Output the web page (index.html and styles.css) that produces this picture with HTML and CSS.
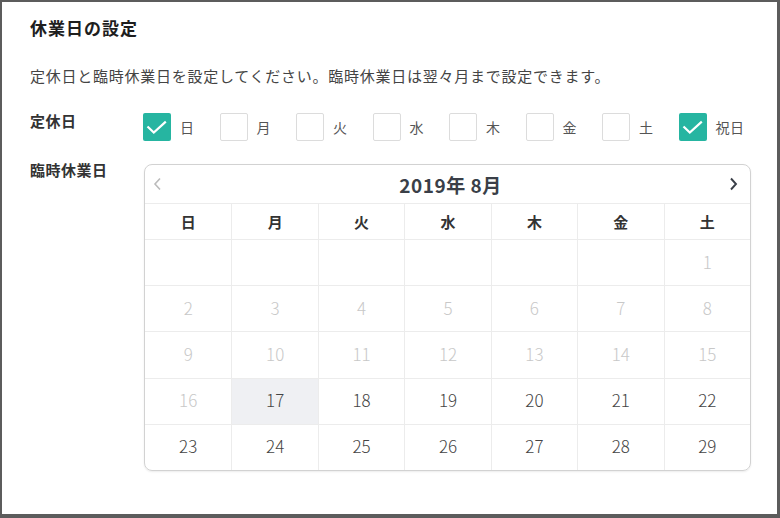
FILE: index.html
```html
<!DOCTYPE html>
<html lang="ja">

<head>
  <meta charset="UTF-8">
  <meta name="viewport" content="width=device-width, initial-scale=1.0">
  <title>休業日の設定</title>
  <link rel="stylesheet" href="styles.css">
</head>

<body>
  <div class="panel">
    <h1>休業日の設定</h1>

    <p class="desc">定休日と臨時休業日を設定してください。臨時休業日は翌々月まで設定できます。</p>

    <div class="form-row">
      <div class="label">定休日</div>
      <div class="checks">
        <label class="check checked"><span class="box"><svg width="28" height="28" viewBox="0 0 28 28"><path d="M4.5 13.5 10.8 19.6 22.8 8.6" fill="none" stroke="#fff" stroke-width="2.2"/></svg></span>日</label>
        <label class="check"><span class="box"></span>月</label>
        <label class="check"><span class="box"></span>火</label>
        <label class="check"><span class="box"></span>水</label>
        <label class="check"><span class="box"></span>木</label>
        <label class="check"><span class="box"></span>金</label>
        <label class="check"><span class="box"></span>土</label>
        <label class="check checked"><span class="box"><svg width="28" height="28" viewBox="0 0 28 28"><path d="M4.5 13.5 10.8 19.6 22.8 8.6" fill="none" stroke="#fff" stroke-width="2.2"/></svg></span>祝日</label>
      </div>
    </div>

    <div class="form-row">
      <div class="label">臨時休業日</div>
      <div class="calendar">
        <div class="cal-head">
          <span class="nav prev">
            <svg width="9" height="14" viewBox="0 0 9 14"><path d="M7 1.5 2 7l5 5.5" fill="none" stroke="currentColor" stroke-width="1.6"/></svg>
          </span>
          <span class="month">2019年 8月</span>
          <span class="nav next">
            <svg width="9" height="14" viewBox="0 0 9 14"><path d="M2 1.5 7 7l-5 5.5" fill="none" stroke="currentColor" stroke-width="1.9"/></svg>
          </span>
        </div>
        <div class="cal-grid">
          <div class="wd">日</div>
          <div class="wd">月</div>
          <div class="wd">火</div>
          <div class="wd">水</div>
          <div class="wd">木</div>
          <div class="wd">金</div>
          <div class="wd">土</div>

          <div class="day"></div>
          <div class="day"></div>
          <div class="day"></div>
          <div class="day"></div>
          <div class="day"></div>
          <div class="day"></div>
          <div class="day off">1</div>

          <div class="day off">2</div>
          <div class="day off">3</div>
          <div class="day off">4</div>
          <div class="day off">5</div>
          <div class="day off">6</div>
          <div class="day off">7</div>
          <div class="day off">8</div>

          <div class="day off">9</div>
          <div class="day off">10</div>
          <div class="day off">11</div>
          <div class="day off">12</div>
          <div class="day off">13</div>
          <div class="day off">14</div>
          <div class="day off">15</div>

          <div class="day off">16</div>
          <div class="day today">17</div>
          <div class="day">18</div>
          <div class="day">19</div>
          <div class="day">20</div>
          <div class="day">21</div>
          <div class="day">22</div>

          <div class="day">23</div>
          <div class="day">24</div>
          <div class="day">25</div>
          <div class="day">26</div>
          <div class="day">27</div>
          <div class="day">28</div>
          <div class="day">29</div>
        </div>
      </div>
    </div>
  </div>
</body>

</html>
```

FILE: styles.css
```css
* {
  box-sizing: border-box;
  margin: 0;
  padding: 0;
}

body {
  font-family: "Noto Sans CJK JP", "Noto Sans", sans-serif;
  background-color: #fff;
  color: #333;
}

.panel {
  width: 780px;
  height: 518px;
  border: 2px solid #5c5c5c;
  border-right-width: 3px;
  border-bottom-width: 4px;
  padding: 14px 10px 0 28px;
  background-color: #fff;
}

h1 {
  font-size: 17px;
  font-weight: bold;
  letter-spacing: 1px;
  color: #1e1e1e;
  line-height: 24px;
  margin-bottom: 26px;
}

.desc {
  font-size: 15px;
  letter-spacing: 0.75px;
  color: #444;
  line-height: 20px;
  margin-bottom: 27px;
}

.form-row {
  display: flex;
  margin-bottom: 21px;
}

.label {
  width: 114px;
  flex-shrink: 0;
  font-size: 15px;
  font-weight: bold;
  letter-spacing: 0.5px;
  color: #333;
  line-height: 16px;
}

.checks {
  display: flex;
  margin-left: -1px;
}

.check {
  display: flex;
  align-items: center;
  width: 76.5px;
  font-size: 14px;
  letter-spacing: 0.5px;
  color: #555;
  line-height: 28px;
}

.check:last-child {
  width: auto;
}

.box {
  display: flex;
  width: 28px;
  height: 28px;
  border: 1px solid #dcdcdc;
  border-radius: 2px;
  margin-right: 9px;
}

.check.checked .box {
  background-color: #26b5a1;
  border: none;
}

.calendar {
  width: 607px;
  flex-shrink: 0;
  border: 1px solid #d2d2d2;
  border-radius: 8px;
  overflow: hidden;
  margin-top: 2px;
  box-shadow: 0 1px 2px rgba(0, 0, 0, 0.08);
}

.cal-head {
  height: 38px;
  display: flex;
  align-items: center;
  justify-content: space-between;
  padding: 0 12px 0 8px;
}

.month {
  font-size: 19px;
  font-weight: bold;
  letter-spacing: 0.5px;
  color: #3a3f48;
  margin-left: 10px;
}

.nav {
  display: flex;
  color: #3a3f48;
}

.nav.prev {
  color: #bbb;
}

.cal-grid {
  display: grid;
  grid-template-columns: repeat(7, 1fr);
  grid-template-rows: 36px repeat(5, 46.2px);
}

.wd,
.day {
  display: flex;
  align-items: center;
  justify-content: center;
  border-top: 1px solid #ececec;
  border-left: 1px solid #ececec;
}

.wd:nth-child(7n + 1),
.day:nth-child(7n + 1) {
  border-left: none;
}

.wd {
  font-size: 15px;
  font-weight: bold;
  color: #333;
}

.day {
  font-size: 17px;
  font-weight: 300;
  color: #444;
  padding-bottom: 3px;
}

.day.off {
  color: #c8c8c8;
}

.day.today {
  background-color: #eff0f3;
}
```
